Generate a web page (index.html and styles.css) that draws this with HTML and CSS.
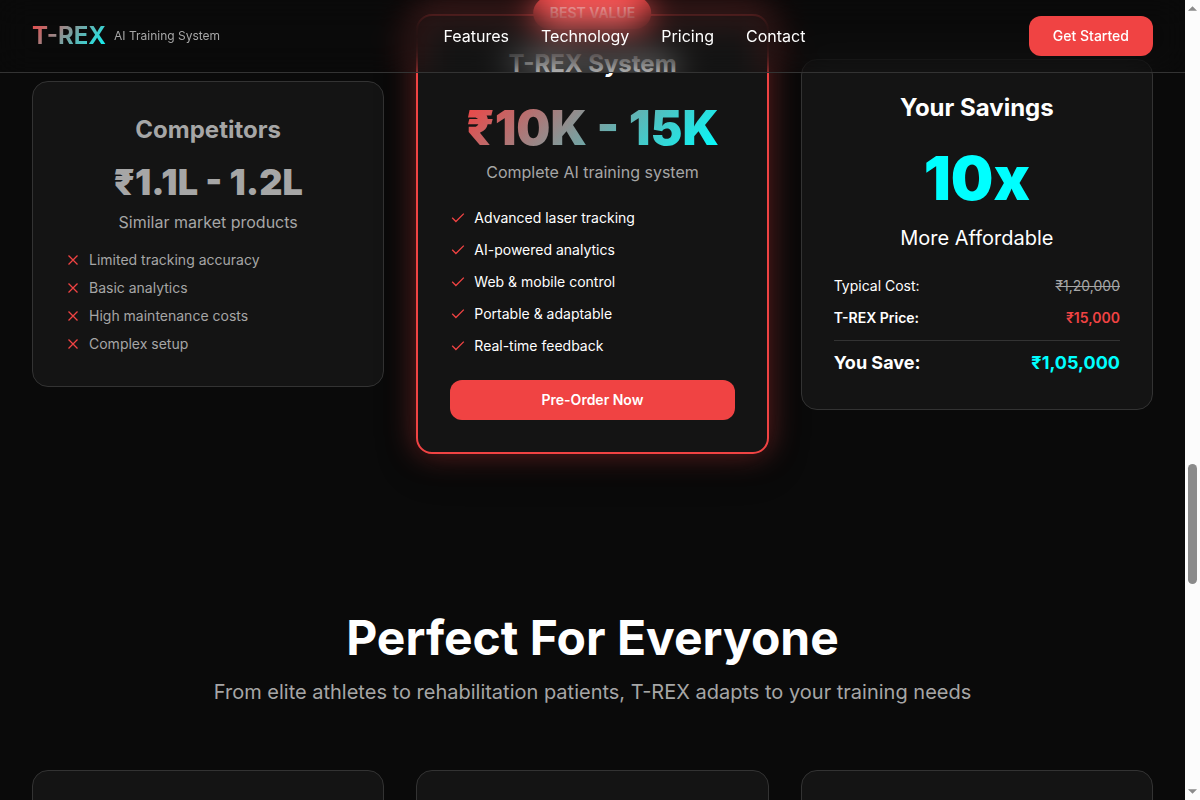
FILE: index.html
```html
<!DOCTYPE html>
<html lang="en">
<head>
<meta charset="utf-8">
<title>T-REX AI Training System</title>
<meta name="viewport" content="width=device-width, initial-scale=1">
<link rel="stylesheet" href="styles.css">
</head>
<body>
<svg class="sprite" aria-hidden="true">
  <symbol id="x" viewBox="0 0 16 16"><path d="M3.5 3.5l9 9M12.5 3.5l-9 9" fill="none" stroke="currentColor" stroke-width="1.3"/></symbol>
  <symbol id="check" viewBox="0 0 16 16"><path d="M2.2 7.8l3.7 3.7 7.9-7.9" fill="none" stroke="currentColor" stroke-width="1.3"/></symbol>
</svg>
<div class="page">
  <header class="header">
    <div class="brand"><a class="logo" href="#">T-REX</a><span class="tagline">AI Training System</span></div>
    <nav class="nav"><a href="#features">Features</a><a href="#technology">Technology</a><a href="#pricing">Pricing</a><a href="#contact">Contact</a></nav>
    <button class="btn" type="button">Get Started</button>
  </header>
  <main>
    <section class="plans" id="pricing">
      <article class="card muted">
        <h3>Competitors</h3>
        <p class="price small">₹1.1L - 1.2L</p>
        <p class="note">Similar market products</p>
        <ul class="list cons">
          <li><svg class="icon"><use href="#x"/></svg>Limited tracking accuracy</li>
          <li><svg class="icon"><use href="#x"/></svg>Basic analytics</li>
          <li><svg class="icon"><use href="#x"/></svg>High maintenance costs</li>
          <li><svg class="icon"><use href="#x"/></svg>Complex setup</li>
        </ul>
      </article>
      <article class="card featured">
        <span class="badge">BEST VALUE</span>
        <h3>T-REX System</h3>
        <p class="price medium">₹10K - 15K</p>
        <p class="note">Complete AI training system</p>
        <ul class="list pros">
          <li><svg class="icon"><use href="#check"/></svg>Advanced laser tracking</li>
          <li><svg class="icon"><use href="#check"/></svg>AI-powered analytics</li>
          <li><svg class="icon"><use href="#check"/></svg>Web &amp; mobile control</li>
          <li><svg class="icon"><use href="#check"/></svg>Portable &amp; adaptable</li>
          <li><svg class="icon"><use href="#check"/></svg>Real-time feedback</li>
        </ul>
        <button class="btn order" type="button">Pre-Order Now</button>
      </article>
      <article class="card savings">
        <h3>Your Savings</h3>
        <p class="price large">10x</p>
        <p class="lead">More Affordable</p>
        <dl class="costs">
          <div><dt>Typical Cost:</dt><dd class="old">₹1,20,000</dd></div>
          <div class="ours"><dt>T-REX Price:</dt><dd>₹15,000</dd></div>
          <div class="save"><dt>You Save:</dt><dd>₹1,05,000</dd></div>
        </dl>
      </article>
    </section>
    <section class="audience">
      <h2>Perfect For Everyone</h2>
      <p>From elite athletes to rehabilitation patients, T-REX adapts to your training needs</p>
      <div class="grid"><article class="card"></article><article class="card"></article><article class="card"></article></div>
    </section>
  </main>
</div>
<div class="scrollbar" aria-hidden="true">
  <svg class="arrow" viewBox="0 0 10 5"><path d="M5 0l5 5H0z"/></svg>
  <span class="thumb"></span>
  <svg class="arrow" viewBox="0 0 10 5"><path d="M0 0h10L5 5z"/></svg>
</div>
</body>
</html>
```
FILE: styles.css
```css
* { box-sizing: border-box; margin: 0; padding: 0; }
body { background: #0a0a0a; color: #fff; font: 16px/24px Inter, sans-serif; height: 100vh; overflow: hidden; display: flex; }
a { color: inherit; text-decoration: none; }
.sprite { position: absolute; width: 0; height: 0; }
.page { flex: 1; min-width: 0; height: 100vh; overflow: hidden; position: relative; }

.header { position: absolute; inset: 0 0 auto; z-index: 5; display: flex; align-items: center; justify-content: space-between; padding: 16px 32px; backdrop-filter: blur(16px); border-bottom: 1px solid #333; }
.brand { display: flex; align-items: center; gap: 8px; }
.logo { font-size: 24px; line-height: 32px; font-weight: 700; background: linear-gradient(135deg, #f04343, #0ff); background-clip: text; color: transparent; }
.tagline { font-size: 12px; line-height: 16px; color: #a6a6a6; }
.nav { display: flex; gap: 32px; }
.btn { height: 40px; border: 0; border-radius: 12px; padding: 0 24px; background: #f04343; color: #fff; font: 500 14px/20px Inter, sans-serif; }

.plans { display: grid; grid-template-columns: repeat(3, minmax(0, 1fr)); gap: 32px; align-items: center; padding: 14px 32px 0; }
.card { position: relative; background: #141414; border: 1px solid #333; border-radius: 16px; padding: 32px; text-align: center; }
.card h3 { font-size: 24px; line-height: 32px; font-weight: 700; margin-bottom: 16px; }
.muted { color: #a6a6a6; }
.price { font-weight: 900; }
.price.small { font-size: 36px; line-height: 40px; margin-bottom: 8px; }
.price.medium { width: fit-content; margin: 0 auto 8px; font-size: 48px; line-height: 48px; background: linear-gradient(135deg, #f04343, #0ff); background-clip: text; color: transparent; }
.price.large { font-size: 60px; line-height: 60px; margin-bottom: 16px; padding-top: 8px; color: #0ff; }
.note { color: #a6a6a6; }
.list { list-style: none; display: grid; font-size: 14px; line-height: 20px; text-align: left; }
.list li { display: flex; align-items: center; gap: 8px; }
.icon { width: 16px; height: 16px; color: #f04343; }
.cons { gap: 8px; margin-top: 16px; }
.pros { gap: 12px; margin: 24px 0; }
.featured { border: 2px solid #f04343; box-shadow: 0 0 30px rgba(240,67,67,.4), 0 10px 40px rgba(0,0,0,.3); }
.card.featured h3 { margin-bottom: 24px; }
.badge { position: absolute; top: -19px; left: 50%; transform: translateX(-50%); background: #f04343; border-radius: 16px; padding: 6px 16px; font-size: 14px; line-height: 20px; font-weight: 600; white-space: nowrap; }
.order { width: 100%; font-weight: 600; }
.lead { font-size: 20px; line-height: 28px; margin-bottom: 24px; }
.costs { display: grid; gap: 12px; font-size: 14px; line-height: 20px; }
.costs div { display: flex; justify-content: space-between; }
.old { color: #a6a6a6; text-decoration: line-through; }
.ours { font-weight: 600; }
.ours dd { color: #f04343; }
.costs .save { border-top: 1px solid #333; padding-top: 8px; font-size: 18px; line-height: 28px; font-weight: 700; }
.save dd { color: #0ff; }

.audience { padding: 160px 32px 0; text-align: center; }
.audience h2 { font-size: 48px; line-height: 48px; font-weight: 700; margin-bottom: 16px; }
.audience p { font-size: 20px; line-height: 28px; color: #a6a6a6; margin-bottom: 64px; }
.grid { display: grid; grid-template-columns: repeat(3, minmax(0, 1fr)); gap: 32px; }
.grid .card { min-height: 240px; }

.scrollbar { width: 15px; background: #fcfcfc; display: flex; flex-direction: column; align-items: center; justify-content: space-between; padding: 6px 0; }
.arrow { width: 9px; height: 5px; fill: #8b8b8b; }
.thumb { width: 9px; height: 120px; margin-top: 247px; border-radius: 5px; background: #8b8b8b; }
```
